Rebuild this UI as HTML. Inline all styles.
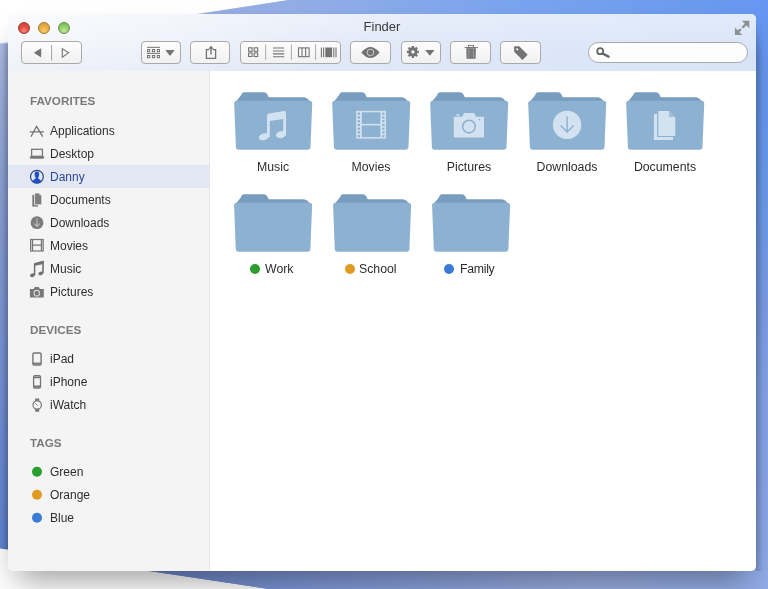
<!DOCTYPE html>
<html><head><meta charset="utf-8">
<style>
*{margin:0;padding:0;box-sizing:border-box}
.ttl,.hd,.it,.lbl{will-change:transform}
html,body{width:768px;height:589px;overflow:hidden;background:#fff;font-family:"Liberation Sans",sans-serif}
.a{position:absolute}
#bg{position:absolute;left:0;top:0}
#win{position:absolute;left:8px;top:13.5px;width:748px;height:557.5px;border-radius:5px;background:#fff;
 box-shadow:0 18px 30px -9px rgba(0,0,0,0.38)}
#title{position:absolute;left:8px;top:13.5px;width:748px;height:57px;border-radius:5px 5px 0 0;
 background:radial-gradient(ellipse 420px 70px at 0 0,rgba(255,255,255,.65),rgba(255,255,255,0)),linear-gradient(180deg,rgba(255,255,255,.25),rgba(255,255,255,0) 70%),linear-gradient(90deg,#eef0f8 0%,#eaeef8 12%,#e2e9f7 36%,#dce6f9 74%,#d7e4f8 100%)}
#side{position:absolute;left:8px;top:70.5px;width:202px;height:500.5px;background:#f4f4f4;border-right:1px solid #e6e6e6;border-radius:0 0 0 5px}
.tl{position:absolute;top:21.5px;width:12px;height:12px;border-radius:50%}
.ttl{position:absolute;left:8px;width:748px;top:17.5px;text-align:center;font-size:13px;color:#3a3a3a;line-height:18px}
.btn{position:absolute;top:41px;height:22.5px;border:1px solid #a9a9a9;border-radius:4px;background:linear-gradient(#fdfdfd,#f1f1f1)}
.hd{position:absolute;left:29.5px;font-size:11.7px;font-weight:bold;color:#7a7a7a;line-height:14px}
.it{position:absolute;left:50px;font-size:12px;color:#2e2e2e;line-height:14px}
.lbl{position:absolute;font-size:12.3px;color:#2e2e2e;text-align:center;width:98px;line-height:14px}
.dot{display:inline-block;width:10px;height:10px;border-radius:50%;vertical-align:-1px;margin-right:5px}
</style></head><body>
<svg id="bg" width="768" height="589">
 <defs>
  <linearGradient id="gl" gradientUnits="userSpaceOnUse" x1="0" y1="43" x2="0" y2="549">
   <stop offset="0" stop-color="#adbbe6"/>
   <stop offset="0.12" stop-color="#9cafdc"/>
   <stop offset="0.32" stop-color="#8aa0d6"/>
   <stop offset="0.7" stop-color="#7590d6"/>
   <stop offset="1" stop-color="#5f84d2"/>
  </linearGradient>
  <linearGradient id="gr" gradientUnits="userSpaceOnUse" x1="0" y1="0" x2="0" y2="589">
   <stop offset="0" stop-color="#6696f0"/>
   <stop offset="0.18" stop-color="#6698f0"/>
   <stop offset="0.33" stop-color="#6c9cec"/>
   <stop offset="0.5" stop-color="#7a9de6"/>
   <stop offset="0.65" stop-color="#84a4ea"/>
   <stop offset="0.85" stop-color="#8ba7ea"/>
   <stop offset="1" stop-color="#92ace8"/>
  </linearGradient>
  <linearGradient id="gt" gradientUnits="userSpaceOnUse" x1="200" y1="0" x2="768" y2="0">
   <stop offset="0" stop-color="#97acE2"/>
   <stop offset="0.18" stop-color="#92adE6"/>
   <stop offset="0.53" stop-color="#7ba4ee"/>
   <stop offset="0.89" stop-color="#6a9aee"/>
   <stop offset="1" stop-color="#6696f0"/>
  </linearGradient>
  <linearGradient id="gb" gradientUnits="userSpaceOnUse" x1="149" y1="0" x2="768" y2="0">
   <stop offset="0" stop-color="#6b84c8"/>
   <stop offset="0.25" stop-color="#7e96d6"/>
   <stop offset="0.7" stop-color="#99ade0"/>
   <stop offset="1" stop-color="#92ace8"/>
  </linearGradient>
 </defs>
 <polygon points="0,43.4 289,0 768,0 768,589 269,589 0,548.6" fill="url(#gl)"/>
 <rect x="740" y="0" width="28" height="589" fill="url(#gr)"/>
 <polygon points="289,0 768,0 768,30 100,30" fill="url(#gt)"/>
 <polygon points="149,571 768,571 768,589 269,589" fill="url(#gb)"/>
</svg>

<div class="a" style="left:2px;top:44px;width:6px;height:505px;background:linear-gradient(90deg,rgba(20,25,40,0),rgba(20,25,40,.22))"></div>
<div class="a" style="left:756px;top:22px;width:7px;height:549px;background:linear-gradient(90deg,rgba(20,25,40,.2),rgba(20,25,40,0));-webkit-mask-image:linear-gradient(180deg,transparent,#000 30px)"></div>
<div id="win"></div>
<div id="title"></div>
<div class="tl" style="left:18px;background:radial-gradient(circle at 50% 75%,#f08a80 0%,#e84c42 45%,#c83a34 100%);border:1px solid #9a3a36"></div>
<div class="tl" style="left:38px;background:radial-gradient(circle at 50% 75%,#f5cf6a 0%,#eab141 45%,#cf9430 100%);border:1px solid #9c7a38"></div>
<div class="tl" style="left:58px;background:radial-gradient(circle at 50% 75%,#bfe6a0 0%,#94d268 45%,#6fae4c 100%);border:1px solid #6a9250"></div>
<div class="ttl">Finder</div>
<div class="btn" style="left:21px;width:61px"></div>
<div class="btn" style="left:141px;width:40.2px"></div>
<div class="btn" style="left:190.2px;width:40.2px"></div>
<div class="btn" style="left:240.2px;width:101.2px"></div>
<div class="btn" style="left:350.2px;width:40.4px"></div>
<div class="btn" style="left:400.5px;width:40.4px"></div>
<div class="btn" style="left:450.4px;width:40.4px"></div>
<div class="btn" style="left:500.3px;width:40.4px"></div>
<div class="btn" style="left:588px;width:159.5px;top:41.5px;height:21.5px;border-radius:11px;background:#fdfdfd"></div>

<div id="side"></div>
<div class="a" style="left:8px;top:165px;width:201px;height:23px;background:#e3e7f3"></div>
<div class="hd" style="top:94px">FAVORITES</div>
<div class="it" style="top:124px">Applications</div>
<div class="it" style="top:147px">Desktop</div>
<div class="it" style="top:170px;color:#2b4a92">Danny</div>
<div class="it" style="top:193px">Documents</div>
<div class="it" style="top:216px">Downloads</div>
<div class="it" style="top:239px">Movies</div>
<div class="it" style="top:262px">Music</div>
<div class="it" style="top:285px">Pictures</div>
<div class="hd" style="top:323.1px">DEVICES</div>
<div class="it" style="top:352px">iPad</div>
<div class="it" style="top:375px">iPhone</div>
<div class="it" style="top:398px">iWatch</div>
<div class="hd" style="top:436.2px">TAGS</div>
<div class="it" style="top:465.1px">Green</div>
<div class="it" style="top:488.1px">Orange</div>
<div class="it" style="top:511.1px">Blue</div>


<svg class="a" style="left:0;top:0" width="768" height="589">
 <g fill="none" stroke="#727272" stroke-width="1.3" stroke-linecap="round">
  <!-- applications -->
  <path d="M36.6 126.3 L31.2 136.2 M36.6 126.3 L42.4 136.2 M30.4 131.9 H43.4"/>
 </g>
 <!-- desktop -->
 <rect x="31.6" y="149.3" width="10.8" height="7" fill="none" stroke="#777" stroke-width="1.3"/>
 <path d="M29.9 156.2 H44.1 V157.6 Q44.1 158.8 43 158.8 H31 Q29.9 158.8 29.9 157.6 Z" fill="#777"/>
 <!-- danny -->
 <circle cx="36.9" cy="176.7" r="6.4" fill="none" stroke="#2b4480" stroke-width="1.2"/>
 <path d="M36.9 171.5 C38.7 171.5 39.4 173 39.2 174.8 C39 176.4 38.5 177.4 38 178.1 C38.2 178.8 39.6 179.4 40.6 180.3 L41 182.2 C39.8 183 38.4 183.3 36.9 183.3 C35.4 183.3 34 183 32.8 182.2 L33.2 180.3 C34.2 179.4 35.6 178.8 35.8 178.1 C35.3 177.4 34.8 176.4 34.6 174.8 C34.4 173 35.1 171.5 36.9 171.5 Z" fill="#2150c4"/>
 <!-- documents -->
 <path d="M32.3 195 H38 V206.6 H32.3 Z" fill="#7a7a7a"/>
 <path d="M34.6 193 H39 L41.8 195.8 V204.8 H34.6 Z" fill="#7e7e7e" stroke="#f4f4f4" stroke-width="0.8"/>
 <path d="M39.2 193.4 V195.6 H41.4 Z" fill="#b5b5b5"/>
 <!-- downloads -->
 <circle cx="37" cy="222.7" r="6.4" fill="#7b7b7b"/>
 <path d="M37 218.6 V226.3 M34.3 223.7 L37 226.5 L39.7 223.7" fill="none" stroke="#bfbfbf" stroke-width="1.1"/>
 <!-- movies -->
 <rect x="30.6" y="239.5" width="12.6" height="11.5" fill="none" stroke="#777" stroke-width="1.2"/>
 <path d="M32.6 239.5 V251 M41.4 239.5 V251 M32.6 245.2 H41.4" stroke="#777" stroke-width="1.2"/>
 <path d="M31.6 241.5 V249.5 M42.4 241.5 V249.5" stroke="#999" stroke-width="0.8" stroke-dasharray="1 1"/>
 <!-- music -->
 <path d="M34.6 264 L43 261.5 V273" fill="none" stroke="#727272" stroke-width="1.6"/>
 <path d="M34.2 263.2 L43.4 261 V264 L34.2 266 Z" fill="#727272"/>
 <path d="M34.6 264 V275" stroke="#727272" stroke-width="1.5"/>
 <ellipse cx="32.5" cy="275.2" rx="2.6" ry="1.8" fill="#727272" transform="rotate(-20 32.5 275.2)"/>
 <ellipse cx="40.9" cy="273.4" rx="2.6" ry="1.8" fill="#727272" transform="rotate(-20 40.9 273.4)"/>
 <!-- pictures -->
 <path d="M29.9 289 H33.8 L34.8 287 H38.8 L39.8 289 H43.8 V297.6 H29.9 Z" fill="#777"/>
 <circle cx="36.8" cy="293.2" r="2.8" fill="none" stroke="#d8d8d8" stroke-width="1.1"/>
 <!-- ipad -->
 <rect x="32.9" y="353" width="8.2" height="12" rx="1.3" fill="none" stroke="#767676" stroke-width="1.4"/>
 <path d="M32.9 363.4 H41.1" stroke="#767676" stroke-width="1.6"/>
 <!-- iphone -->
 <rect x="33.6" y="375.7" width="6.9" height="12.3" rx="1.3" fill="none" stroke="#767676" stroke-width="1.3"/>
 <path d="M33.6 377.3 H40.5 M33.6 386.3 H40.5" stroke="#767676" stroke-width="1.8"/>
 <!-- iwatch -->
 <path d="M35.2 398.5 H39.2 V401.5 H35.2 Z M35.2 408.5 H39.2 V411.7 H35.2 Z" fill="#777"/>
 <circle cx="37.2" cy="405" r="4.2" fill="#f4f4f4" stroke="#777" stroke-width="1.2"/>
 <path d="M35.6 403.4 L37.6 405.6" stroke="#777" stroke-width="0.9"/>
 <!-- tags -->
 <circle cx="37" cy="471.8" r="5" fill="#2a9e2e"/>
 <circle cx="37" cy="494.8" r="5" fill="#e09a21"/>
 <circle cx="37" cy="517.8" r="5" fill="#3a7bd5"/>
</svg>

<svg class="a" style="left:0;top:0" width="768" height="589">
 <g fill="#737373">
  <!-- nav -->
  <path d="M33.8 52.85 L41.2 48.2 V57.5 Z"/>
  <path d="M51.6 45 V60.6" stroke="#a4a4a4" stroke-width="1"/>
  <path d="M62.3 48.6 L68.6 52.85 L62.3 57.1 Z" fill="none" stroke="#737373" stroke-width="1.1" stroke-linejoin="miter"/>
  <!-- arrange -->
  <path d="M147 47.3 H160 M147 53.4 H160" stroke="#737373" stroke-width="1"/>
  <g fill="none" stroke="#737373" stroke-width="1">
   <rect x="147.5" y="49.5" width="2.2" height="2.2"/><rect x="152.4" y="49.5" width="2.2" height="2.2"/><rect x="157.3" y="49.5" width="2.2" height="2.2"/>
   <rect x="147.5" y="55.5" width="2.2" height="2.2"/><rect x="152.4" y="55.5" width="2.2" height="2.2"/><rect x="157.3" y="55.5" width="2.2" height="2.2"/>
  </g>
  <path d="M165.3 50 H174.7 L170 55.9 Z"/>
  <!-- share -->
  <path d="M209.3 49.6 H206.4 V58.3 H215.6 V49.6 H212.7" fill="none" stroke="#737373" stroke-width="1.3"/>
  <path d="M211 47.5 V54.5" stroke="#737373" stroke-width="1.4"/>
  <path d="M208.3 48.8 L211 45.8 L213.7 48.8 Z"/>
  <!-- view group -->
  <path d="M265.7 44.5 V59.8 M291.4 44.5 V59.8 M315.6 44.5 V59.8" stroke="#a9a9a9" stroke-width="1"/>
  <g fill="none" stroke="#737373" stroke-width="1.1">
   <rect x="248.6" y="47.8" width="3.5" height="3.5"/><rect x="254.2" y="47.8" width="3.5" height="3.5"/>
   <rect x="248.6" y="53" width="3.5" height="3.5"/><rect x="254.2" y="53" width="3.5" height="3.5"/>
   <path d="M273 48 H284.2 M273 51 H284.2 M273 53.9 H284.2 M273 56.8 H284.2"/>
   <rect x="298.5" y="47.9" width="10.6" height="8.8"/>
   <path d="M302 47.9 V56.7 M305.6 47.9 V56.7"/>
   <path d="M321.4 47.5 V57.2 M323.6 47.5 V57.2 M333.8 47.5 V57.2 M336 47.5 V57.2"/>
  </g>
  <rect x="325.3" y="47.5" width="6.8" height="9.7"/>
  <!-- eye -->
  <path d="M361.3 52.4 Q366 46.9 370.4 46.9 Q374.8 46.9 379.6 52.4 Q374.8 57.9 370.4 57.9 Q366 57.9 361.3 52.4 Z"/>
  <circle cx="370.4" cy="52.4" r="3.3" fill="none" stroke="#d6d6d6" stroke-width="0.9"/>
  <!-- gear -->
  <g transform="translate(412.9 51.9)">
   <circle r="4.6"/>
   <g stroke="#737373" stroke-width="2.2">
    <path d="M0 -6 V6 M-6 0 H6 M-4.25 -4.25 L4.25 4.25 M-4.25 4.25 L4.25 -4.25"/>
   </g>
   <circle r="1.7" fill="#f7f7f7"/>
  </g>
  <path d="M425.2 50 H434.6 L429.9 55.8 Z"/>
  <!-- trash -->
  <rect x="468.4" y="45.4" width="5.2" height="2" fill="none" stroke="#737373" stroke-width="0.9"/>
  <path d="M464.6 47.6 H477.9" stroke="#737373" stroke-width="1"/>
  <path d="M466.3 48.2 H475.9 L475.6 58.8 H466.6 Z"/>
  <path d="M468.8 49.5 V57.5 M473.4 49.5 V57.5" stroke="#a8a8a8" stroke-width="0.9"/>
  <path d="M471.1 49.5 V57.5" stroke="#8a8a8a" stroke-width="0.7"/>
  <!-- tag -->
  <path d="M514.2 46.3 H519.2 L527.7 54.7 L522.4 60 L514.2 51.7 Z"/>
  <circle cx="517.2" cy="49.3" r="1.1" fill="#f7f7f7"/>
  <!-- search -->
  <circle cx="600.2" cy="51.2" r="3" fill="none" stroke="#666" stroke-width="1.8"/>
  <path d="M602.5 53.5 L608.6 56.6" stroke="#666" stroke-width="2.4" stroke-linecap="round"/>
  <!-- fullscreen -->
  <g fill="#8b9090">
   <path d="M741.9 20.8 H749.3 V28.2 Z"/>
   <path d="M734.9 35 H742.3 L734.9 27.6 Z"/>
   <path d="M746.2 23.9 L742.4 27.7 M738.1 31.8 L740.8 29.1" stroke="#8b9090" stroke-width="2.3"/>
  </g>
 </g>
</svg>
<svg class="a" style="left:0;top:0" width="768" height="589">
 <defs><g id="fd"><path d="M0,3 L6.3,-4.8 Q7.3,-6.2 7.5,-7 Q8,-8.5 9.9,-8.5 L29.8,-8.5 Q32,-8.5 33.1,-6.5 L34.6,-3.6 L69.5,-3.6 Q71.8,-3.6 73.3,-2 L78,3 Z" fill="#789dbe"/><path d="M2.6,0 H75.4 Q78,0 78,2.6 L76.3,46.3 Q76.1,49 73.5,49 H4.5 Q1.9,49 1.7,46.3 L0,2.6 Q0,0 2.6,0 Z" fill="#8db1d0"/></g></defs>
 <use href="#fd" x="234.2" y="100.8"/>
 <use href="#fd" x="332.2" y="100.8"/>
 <use href="#fd" x="430.2" y="100.8"/>
 <use href="#fd" x="528.2" y="100.8"/>
 <use href="#fd" x="626.2" y="100.8"/>
 <use href="#fd" x="234.1" y="202.8"/>
 <use href="#fd" x="333.1" y="202.8"/>
 <use href="#fd" x="432.1" y="202.8"/>
 <g fill="#d3e2f0">
  <path d="M267 115.6 Q267 113.7 269 113.4 L284 111 Q286 110.7 286 112.6 V135.5 H283.2 V118.9 L269.8 121.1 V137 H267 Z"/>
  <ellipse cx="264" cy="136.8" rx="5.2" ry="3.3" transform="rotate(-15 264 136.8)"/>
  <ellipse cx="281" cy="134.6" rx="5.1" ry="3.4" transform="rotate(-15 281 134.6)"/>
 </g>
 <g>
  <rect x="356.2" y="110.8" width="29.8" height="27.8" fill="#d3e2f0"/>
  <rect x="361.8" y="112.3" width="18.6" height="11.6" fill="#8db1d0"/>
  <rect x="361.8" y="125.4" width="18.6" height="11.7" fill="#8db1d0"/>
  <rect x="357.7" y="112.60" width="2.3" height="2.2" fill="#8db1d0"/><rect x="382.2" y="112.60" width="2.3" height="2.2" fill="#8db1d0"/>
  <rect x="357.7" y="116.35" width="2.3" height="2.2" fill="#8db1d0"/><rect x="382.2" y="116.35" width="2.3" height="2.2" fill="#8db1d0"/>
  <rect x="357.7" y="120.10" width="2.3" height="2.2" fill="#8db1d0"/><rect x="382.2" y="120.10" width="2.3" height="2.2" fill="#8db1d0"/>
  <rect x="357.7" y="123.85" width="2.3" height="2.2" fill="#8db1d0"/><rect x="382.2" y="123.85" width="2.3" height="2.2" fill="#8db1d0"/>
  <rect x="357.7" y="127.60" width="2.3" height="2.2" fill="#8db1d0"/><rect x="382.2" y="127.60" width="2.3" height="2.2" fill="#8db1d0"/>
  <rect x="357.7" y="131.35" width="2.3" height="2.2" fill="#8db1d0"/><rect x="382.2" y="131.35" width="2.3" height="2.2" fill="#8db1d0"/>
  <rect x="357.7" y="135.10" width="2.3" height="2.2" fill="#8db1d0"/><rect x="382.2" y="135.10" width="2.3" height="2.2" fill="#8db1d0"/>
 </g>
 <g>
  <path d="M453.8 116.8 H462.2 L464 112.9 H474.2 L476 116.8 H484 V137.4 H453.8 Z" fill="#d3e2f0"/>
  <rect x="456.5" y="114.3" width="3" height="1.6" fill="#d3e2f0"/>
  <circle cx="469" cy="126.6" r="6.3" fill="none" stroke="#8db1d0" stroke-width="1.6"/>
  <circle cx="479.5" cy="119.6" r="0.8" fill="#8db1d0"/>
 </g>
 <circle cx="567.1" cy="124.9" r="14.2" fill="#d3e2f0"/>
 <path d="M567.1 116.2 V132 M560.6 125.5 L567.1 132 L573.6 125.5" fill="none" stroke="#8db1d0" stroke-width="1.4"/>
 <path d="M653.9 114 H657.5 V137 H673 V140.1 H653.9 Z" fill="#d3e2f0"/>
 <path d="M657.8 110.4 H669 L675.9 117.3 V136.5 H657.8 Z" fill="#d3e2f0" stroke="#8db1d0" stroke-width="1.1"/>
 <path d="M669 110.9 V117.1 H675.4 Z" fill="#a3bfd8"/>
</svg>

<div class="lbl" style="left:224.2px;top:160px">Music</div>
<div class="lbl" style="left:322.2px;top:160px">Movies</div>
<div class="lbl" style="left:420.2px;top:160px">Pictures</div>
<div class="lbl" style="left:518.2px;top:160px">Downloads</div>
<div class="lbl" style="left:616.2px;top:160px">Documents</div>
<div class="a" style="left:250px;top:264.2px;width:10px;height:10px;border-radius:50%;background:#2a9e2e"></div>
<div class="a" style="left:344.8px;top:264.2px;width:10px;height:10px;border-radius:50%;background:#e09a21"></div>
<div class="a" style="left:444.2px;top:264.2px;width:10px;height:10px;border-radius:50%;background:#3a7bd5"></div>
<div class="lbl" style="left:265.3px;top:262px;width:auto;text-align:left">Work</div>
<div class="lbl" style="left:359.2px;top:262px;width:auto;text-align:left">School</div>
<div class="lbl" style="left:459.5px;top:262px;width:auto;text-align:left;letter-spacing:-0.3px">Family</div>
</body></html>
